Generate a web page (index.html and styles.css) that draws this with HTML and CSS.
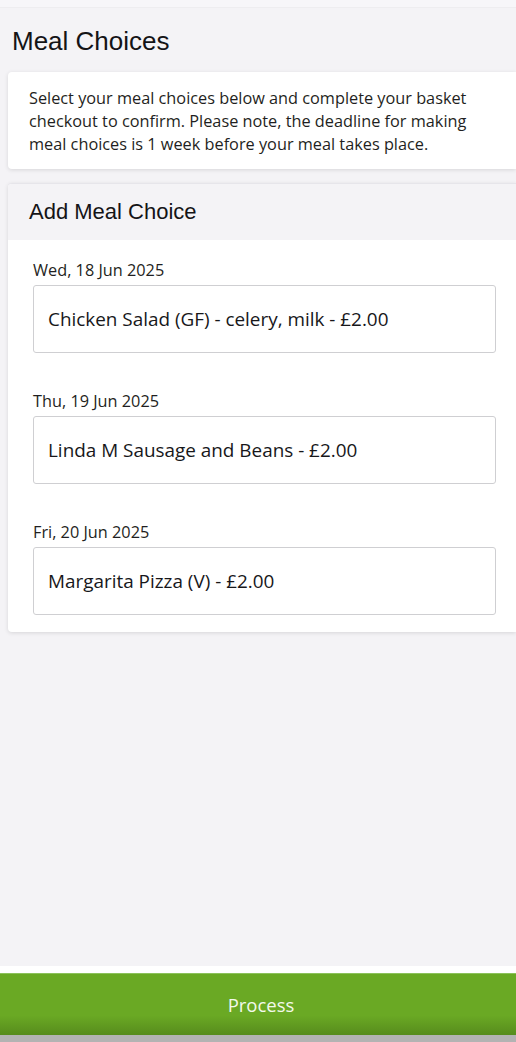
FILE: index.html
```html
<!DOCTYPE html>
<html>
<head>
<title>Meal Choices</title>
<meta name="viewport" content="width=device-width, initial-scale=1.0">
<link rel="stylesheet" href="styles.css">
</head>
<body>
    <div class="top-strip"></div>

    <div class="page-content">
        <h1 class="page-title">Meal Choices</h1>

        <div class="card info-card">
            <p class="info-text">Select your meal choices below and complete your basket checkout to confirm. Please note, the deadline for making meal choices is 1 week before your meal takes place.</p>
        </div>

        <div class="card meal-card">
            <div class="meal-card-header">
                <h2 class="meal-card-title">Add Meal Choice</h2>
            </div>
            <div class="meal-list">
                <div class="meal-row">
                    <label class="meal-date">Wed, 18 Jun 2025</label>
                    <div class="meal-select">Chicken Salad (GF) - celery, milk - £2.00</div>
                </div>
                <div class="meal-row">
                    <label class="meal-date">Thu, 19 Jun 2025</label>
                    <div class="meal-select">Linda M Sausage and Beans - £2.00</div>
                </div>
                <div class="meal-row">
                    <label class="meal-date">Fri, 20 Jun 2025</label>
                    <div class="meal-select">Margarita Pizza (V) - £2.00</div>
                </div>
            </div>
        </div>
    </div>

    <div class="footer-bar">
        <button class="process-button">Process</button>
    </div>
    <div class="bottom-strip"></div>
</body>
</html>
```

FILE: styles.css
```css
/* Page layout */
body {
    margin: 0;
    height: 1042px;
    display: flex;
    flex-direction: column;
    background-color: #f4f3f6;
    color: #1c1c1e;
    font-family: "Open Sans", sans-serif;
    overflow: hidden;
}

.top-strip {
    height: 7px;
    background-color: #f7f6f9;
    border-bottom: 1px solid #eeedf0;
}

.page-content {
    flex: 1;
    padding-left: 8px;
}

.page-title {
    margin: 0;
    padding: 18px 0 0 4px;
    height: 46px;
    font-family: "Liberation Sans", Arial, sans-serif;
    font-weight: normal;
    font-size: 26px;
    line-height: 30px;
    color: #141416;
}

/* Cards */
.card {
    background-color: #ffffff;
    border-radius: 4px 0 0 4px;
    box-shadow: 0 1px 4px rgba(0, 0, 0, 0.12);
}

.info-card {
    padding: 15px 20px 13px 21px;
}

.info-text {
    margin: 0;
    font-size: 16.3px;
    line-height: 23px;
    color: #1f1f22;
}

.meal-card {
    margin-top: 14px;
    border-top: 1px solid #e6e5ea;
    overflow: hidden;
}

.meal-card-header {
    background-color: #f4f3f6;
    height: 56px;
    display: flex;
    align-items: center;
    padding-left: 21px;
}

.meal-card-title {
    margin: 0;
    font-family: "Liberation Sans", Arial, sans-serif;
    font-weight: normal;
    font-size: 22px;
    color: #141416;
}

.meal-list {
    padding: 19px 20px 17px 25px;
    display: flex;
    flex-direction: column;
    gap: 37px;
}

.meal-row {
    display: flex;
    flex-direction: column;
    gap: 4px;
}

.meal-date {
    font-size: 16.3px;
    line-height: 22px;
    color: #1f1f22;
}

.meal-select {
    height: 66px;
    border: 1px solid #cfcfd2;
    border-radius: 3px;
    display: flex;
    align-items: center;
    padding-left: 14px;
    font-size: 18.9px;
    color: #17171a;
}

/* Footer button */
.footer-bar {
    background-color: #ffffff;
    padding-top: 7px;
}

.process-button {
    display: block;
    width: 100%;
    height: 62px;
    border: none;
    border-top: 1px solid #8cc25a;
    background: linear-gradient(to bottom, #6aa924 0%, #6aa924 68%, #578c1d 100%);
    color: #f3f9ec;
    font-family: "Open Sans", sans-serif;
    font-size: 18.5px;
    padding: 0 0 0 6px;
}

.bottom-strip {
    height: 7px;
    background-color: #b3b3b3;
}
```
